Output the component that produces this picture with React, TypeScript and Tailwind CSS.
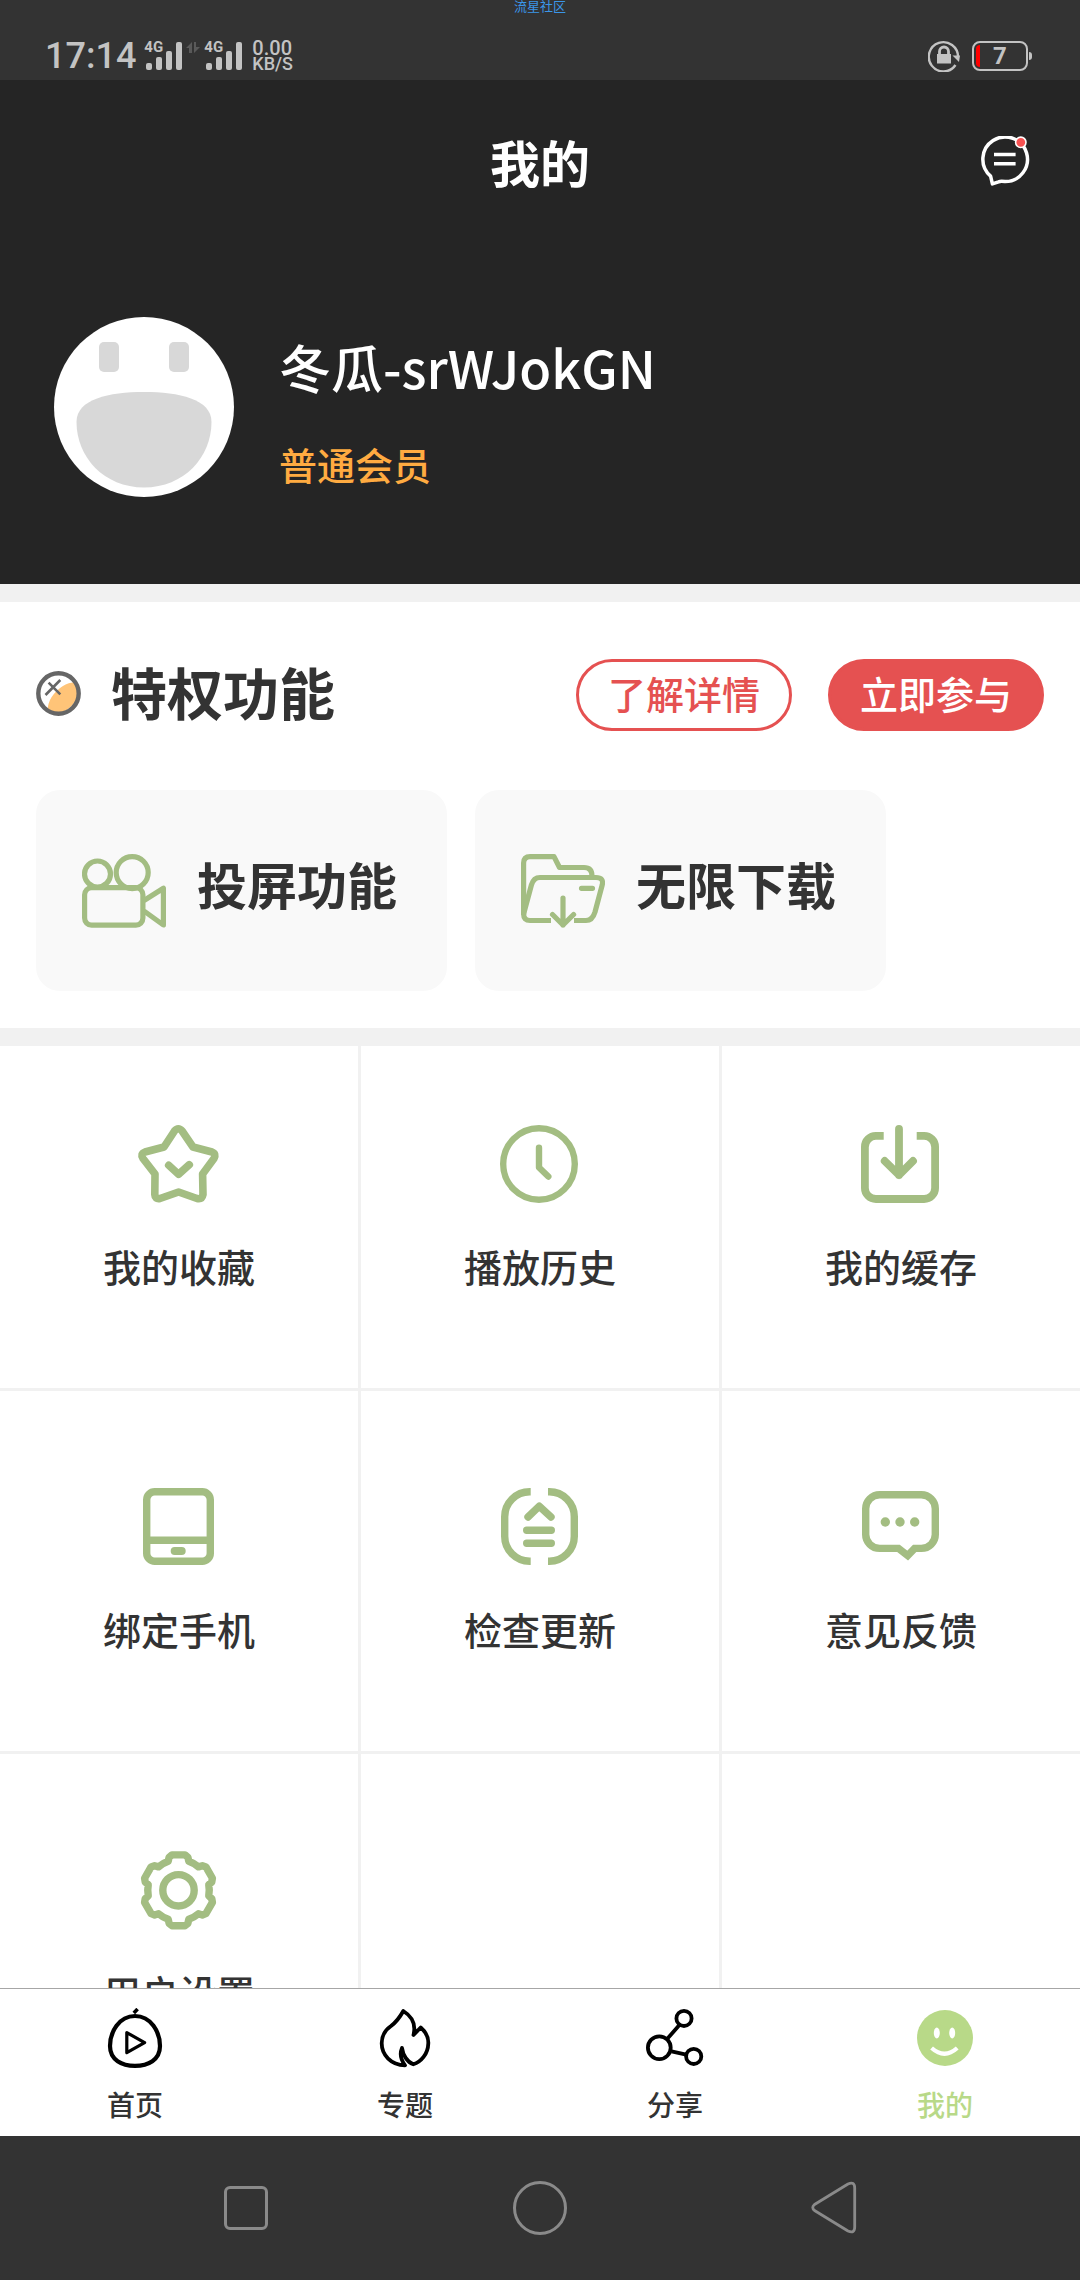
import type { ReactNode } from "react";

const GREEN = "#a3bd82";

function Signal() {
  return (
    <div className="relative h-7 w-[38px]">
      <span className="absolute left-0 top-0 text-[15px] leading-[11px] font-bold">4G</span>
      <svg className="h-7 w-[38px]" viewBox="0 0 38 28" fill="currentColor" aria-hidden="true">
        <rect x="2" y="21" width="6" height="7" rx="2" />
        <rect x="12" y="15" width="6" height="13" rx="2" />
        <rect x="22" y="9" width="6" height="19" rx="2" />
        <rect x="32" y="0" width="6" height="28" rx="2" />
      </svg>
    </div>
  );
}

function StatusBar() {
  return (
    <div className="shrink-0 bg-[#333333] text-[#c3c3c3] font-[Roboto,'Noto_Sans_CJK_SC',sans-serif]">
      <p className="text-center text-[13px] leading-[13px] text-[#3b96e8]">流星社区</p>
      <div className="flex h-[67px] items-center justify-between pt-[18px] pr-12 pl-[45px]">
        <div className="flex items-center">
          <time className="mr-2 text-[36px] leading-8 font-medium">17:14</time>
          <Signal />
          <svg className="mx-1 h-7 w-[14px]" viewBox="0 0 14 28" fill="#5a5a5a" aria-hidden="true">
            <path d="M6 0V11H3V6H0ZM8 0H10V5H14L8 11Z" />
          </svg>
          <Signal />
          <div className="ml-[10px] font-medium">
            <p className="text-[20px] leading-4">0.00</p>
            <p className="text-[18px] leading-4">KB/S</p>
          </div>
        </div>
        <div className="flex items-center gap-3">
          <svg className="size-8" viewBox="0 0 32 32" fill="none" stroke="currentColor" aria-hidden="true">
            <path d="M30 17A14.6 14.6 0 1 0 27.5 25" strokeWidth="2.4" />
            <path d="M24.5 15.5H32L31 22Z" fill="currentColor" stroke="none" />
            <rect x="9" y="14" width="14" height="9.5" fill="currentColor" stroke="none" />
            <path d="M11.5 15V11.5A4.4 4.4 0 0 1 20.5 11.5V15" strokeWidth="2.8" />
          </svg>
          <div className="flex items-center gap-px">
            <div className="flex h-[30px] w-14 items-center rounded-lg border-2 border-current px-[2px]">
              <span className="h-[22px] w-1 rounded-l-sm bg-[#ff0000]" />
              <span className="flex-1 pr-1 text-center text-[24px] leading-6 font-bold">7</span>
            </div>
            <span className="h-2 w-[3px] rounded-r-sm bg-current" />
          </div>
        </div>
      </div>
    </div>
  );
}

function Header() {
  return (
    <header className="bg-[#252525] pb-[87px] text-white">
      <div className="grid h-[162px] grid-cols-[1fr_auto_1fr] items-center px-[50px]">
        <h1 className="col-start-2 text-[50px] leading-[60px] font-bold">我的</h1>
        <button type="button" aria-label="消息" className="justify-self-end">
          <svg className="size-[50px]" viewBox="0 0 50 50" fill="none" stroke="currentColor">
            <path
              d="M10.6 40.2A22.3 22.3 0 1 1 25 45.6Q20.5 45 18.5 45.8L12.4 47.9Z"
              strokeWidth="3.5"
              strokeLinejoin="round"
            />
            <path d="M14 18.5H35.6M14 27.7H35.6" strokeWidth="3.5" />
            <circle cx="40.8" cy="6.3" r="5.2" fill="#f85252" strokeWidth="1.6" />
          </svg>
        </button>
      </div>
      <div className="mt-[75px] flex gap-[45px] pl-[54px]">
        <svg className="size-[180px] shrink-0" viewBox="0 0 180 180" role="img" aria-label="头像">
          <circle cx="90" cy="90" r="90" fill="#ffffff" />
          <g fill="#d8d8d8">
            <rect x="45" y="25" width="20" height="30" rx="5" />
            <rect x="115" y="25" width="20" height="30" rx="5" />
            <path d="M22.5 105C22.5 82 55 75 90 75S157.5 82 157.5 105C157.5 140 130 170.5 90 170.5S22.5 140 22.5 105Z" />
          </g>
        </svg>
        <div className="pt-5">
          <p className="text-[52px] leading-[60px] font-medium">冬瓜-srWJokGN</p>
          <p className="mt-[45px] text-[38px] leading-11 font-medium text-[#ffab41]">普通会员</p>
        </div>
      </div>
    </header>
  );
}

function CameraIcon() {
  return (
    <svg className="h-[74px] w-[84px]" viewBox="0 0 84 74" fill="none" stroke={GREEN} strokeWidth="5.2" strokeLinejoin="round" aria-hidden="true">
      <circle cx="15.5" cy="20" r="13" />
      <circle cx="50.2" cy="18.6" r="16" />
      <rect x="2.6" y="33.7" width="58.3" height="37.4" rx="7" />
      <path d="M62 46.5L81.4 34.2V71L62 57" />
    </svg>
  );
}

function FolderIcon() {
  return (
    <svg className="h-[74px] w-[84px]" viewBox="0 0 84 74" fill="none" stroke={GREEN} strokeWidth="5.2" strokeLinejoin="round" aria-hidden="true">
      <path d="M2.6 61V9Q2.6 2.6 9 2.6H33L38.5 13.5H63Q71 13.5 71 22" />
      <path d="M30 66.5H9Q2.6 66.5 2.6 60L10.4 31Q12.5 23.5 19 23.5H75Q83 23.5 81.2 31L74 58Q71.5 66.5 65 66.5H53" />
      <path d="M60.5 34.3H71.5M42 44V71M31.5 60.5L42 71L52.6 60.5" strokeLinecap="round" />
    </svg>
  );
}

const privileges = [
  { label: "投屏功能", icon: <CameraIcon /> },
  { label: "无限下载", icon: <FolderIcon /> },
];

function Privileges() {
  return (
    <section className="bg-white px-9 pt-[57px] pb-[37px]">
      <div className="flex h-[72px] items-center">
        <svg className="mb-1 size-[45px]" viewBox="0 0 45 45" fill="none" aria-hidden="true">
          <clipPath id="disc">
            <circle cx="22.5" cy="22.5" r="19" />
          </clipPath>
          <g clipPath="url(#disc)">
            <ellipse cx="28" cy="27.5" rx="20" ry="10.5" transform="rotate(-45 28 27.5)" fill="#ffc478" />
          </g>
          <circle cx="22.5" cy="22.5" r="20.2" stroke="#666666" strokeWidth="4.4" />
          <path d="M9.5 24L24.3 9M12.6 11.7L24.3 23.3" stroke="#666666" strokeWidth="2.6" />
        </svg>
        <h2 className="ml-[30px] flex-1 pb-2 text-[56px] leading-[64px] font-bold">特权功能</h2>
        <div className="flex gap-9 text-[38px] font-medium">
          <button type="button" className="w-[216px] rounded-full border-3 border-[#e55151] pb-1 leading-[62px] text-[#e55151]">
            了解详情
          </button>
          <button type="button" className="w-[216px] rounded-full border-3 border-[#e55151] bg-[#e55151] pb-1 leading-[62px] text-white">
            立即参与
          </button>
        </div>
      </div>
      <div className="mt-[59px] flex gap-7">
        {privileges.map((p) => (
          <button
            key={p.label}
            type="button"
            className="flex h-[201px] w-[411px] items-center gap-[31px] rounded-3xl bg-[#f9f9f9] pl-[46px] font-bold"
          >
            {p.icon}
            <span className="pb-4 text-[50px] leading-[60px]">{p.label}</span>
          </button>
        ))}
      </div>
    </section>
  );
}

function GridIcon({ children, width = 7.4 }: { children: ReactNode; width?: number }) {
  return (
    <svg
      className="h-[78px] w-[84px] overflow-visible"
      viewBox="0 0 84 78"
      fill="none"
      stroke={GREEN}
      strokeWidth={width}
      strokeLinejoin="round"
      aria-hidden="true"
    >
      {children}
    </svg>
  );
}

/* Six-toothed gear outline centred on the origin. */
function gearPath() {
  const tooth = [
    [-10.3, -29],
    [-9.4, -33],
    [-6.5, -35.4],
    [6.5, -35.4],
    [9.4, -33],
    [10.3, -29],
  ];
  let d = "";
  for (let k = 0; k < 6; k++) {
    const a = (k * Math.PI) / 3;
    tooth.forEach(([x, y], i) => {
      const px = (x * Math.cos(a) - y * Math.sin(a)).toFixed(2);
      const py = (x * Math.sin(a) + y * Math.cos(a)).toFixed(2);
      const cmd = i > 0 ? "L" : k === 0 ? "M" : "A30.7 30.7 0 0 1 ";
      d += `${cmd}${px} ${py}`;
    });
  }
  return `${d}A30.7 30.7 0 0 1 -10.3 -29Z`;
}

const entries = [
  {
    label: "我的收藏",
    icon: (
      <GridIcon width={7.6}>
        <path d="M27 22L37.5 6Q41.3 1.5 45.1 6L56 22L75 27Q79.5 28.8 77 33.5L65.6 49L66 69.5Q65 74.5 60 73.5L41.6 67L23 73.5Q18 74.5 17.8 69.5L18 49L6 33.5Q3 28.8 8 27Z" />
        <path d="M31.7 40.3L41.5 49.3L52.3 39.7" strokeLinecap="round" />
      </GridIcon>
    ),
  },
  {
    label: "播放历史",
    icon: (
      <GridIcon width={6.4}>
        <circle cx="41" cy="39" r="35.8" />
        <path d="M41 22.7V42.5L50.3 51.5" strokeLinecap="round" />
      </GridIcon>
    ),
  },
  {
    label: "我的缓存",
    icon: (
      <GridIcon width={7.8}>
        <path d="M24.7 10.9H16.9A11 11 0 0 0 5.9 21.9V63A11 11 0 0 0 16.9 74H65.1A11 11 0 0 0 76.1 63V21.9A11 11 0 0 0 65.1 10.9H57.7" />
        <path d="M40 4V50M25.7 36L40 50L54 36" strokeLinecap="round" />
      </GridIcon>
    ),
  },
  {
    label: "绑定手机",
    icon: (
      <GridIcon>
        <rect x="9.7" y="3.7" width="63.6" height="69.6" rx="8" />
        <path d="M9.7 52.2H73.3" />
        <rect x="33.7" y="59" width="15" height="8" rx="4" fill={GREEN} stroke="none" />
      </GridIcon>
    ),
  },
  {
    label: "检查更新",
    icon: (
      <GridIcon>
        <path d="M32.7 3.7H31.7A25 25 0 0 0 6.7 28.7V48.3A25 25 0 0 0 31.7 73.3H32.7M50 3.7H51.3A25 25 0 0 1 76.3 28.7V48.3A25 25 0 0 1 51.3 73.3H50" />
        <path d="M30 29L41.3 18.2L53 29M28.7 42.3H53.3M28.7 55.3H53.3" strokeLinecap="round" />
      </GridIcon>
    ),
  },
  {
    label: "意见反馈",
    icon: (
      <GridIcon>
        <path
          d="M20.7 6.7H62.3A14 14 0 0 1 76.3 20.7V46.4A14 14 0 0 1 62.3 60.4H55.6L48.7 67.6L39.5 60.4H20.7A14 14 0 0 1 6.7 46.4V20.7A14 14 0 0 1 20.7 6.7Z"
          strokeLinejoin="miter"
        />
        <g fill={GREEN} stroke="none">
          <circle cx="26.3" cy="34" r="4.7" />
          <circle cx="41" cy="34" r="4.7" />
          <circle cx="55.7" cy="34" r="4.7" />
        </g>
      </GridIcon>
    ),
  },
  {
    label: "用户设置",
    icon: (
      <GridIcon>
        <g transform="translate(41.5 39.3)">
          <path d={gearPath()} />
          <circle r="15.7" />
        </g>
      </GridIcon>
    ),
  },
];

function EntryGrid() {
  return (
    <section className="grid grid-cols-3 gap-[3px] bg-[#f1f1f1]">
      {entries.map((e, i) => (
        <button
          key={e.label}
          type="button"
          className={
            i < 3
              ? "flex flex-col items-center bg-white pt-[79px] pb-[97px]"
              : "flex flex-col items-center bg-white pt-[97px] pb-[97px]"
          }
        >
          {e.icon}
          <span className="mt-[37px] text-[38px] leading-[51px] font-medium">{e.label}</span>
        </button>
      ))}
      <div className="bg-white" />
      <div className="bg-white" />
    </section>
  );
}

const tabs = [
  {
    label: "首页",
    active: false,
    icon: (
      <>
        <path d="M30 8C46 8 55 24 55 38C55 52 43 57.8 30 57.8S5 52 5 38C5 24 14 8 30 8Z" strokeWidth="4.2" />
        <path d="M28.8 5L32.6 1" strokeWidth="3.6" />
        <path d="M21.8 24.6L39.6 34.7L21.8 44.6Z" strokeWidth="3.2" />
      </>
    ),
  },
  {
    label: "专题",
    active: false,
    icon: (
      <path
        d="M28.3 3C38 9 41 17 38.5 27L45.7 19.5C52 25 53.5 31 53.3 35.3C53 46 46 54 38.3 56.3C32 54 28 47 27 40C24.5 46 26 52 30 57.3C16 57 6.7 47 6.7 35.3C6.7 27 11 21.5 16 18C22 13.5 25 9 28.3 3Z"
        strokeWidth="3.8"
      />
    ),
  },
  {
    label: "分享",
    active: false,
    icon: (
      <g strokeWidth="3.8">
        <circle cx="14.3" cy="39.7" r="11.4" />
        <circle cx="39" cy="10.4" r="7.6" />
        <circle cx="48.7" cy="48.4" r="7.6" />
        <path d="M22.3 30.8L34.6 16.8M26.5 43.4L41.2 46.6" />
      </g>
    ),
  },
  {
    label: "我的",
    active: true,
    icon: (
      <>
        <circle cx="30" cy="30" r="28" fill="#b8d988" stroke="none" />
        <ellipse cx="21.8" cy="25" rx="3" ry="5.4" fill="#ffffff" stroke="none" />
        <ellipse cx="37.2" cy="25" rx="3" ry="5.4" fill="#ffffff" stroke="none" />
        <path d="M16.6 40Q29.5 51.5 42.2 40" stroke="#ffffff" strokeWidth="4.2" strokeLinejoin="miter" />
      </>
    ),
  },
];

function TabBar() {
  return (
    <nav className="grid shrink-0 grid-cols-4 border-t border-[#a6a6a6] bg-white pt-[19px] pb-3">
      {tabs.map((t) => (
        <a
          key={t.label}
          href="#"
          aria-current={t.active ? "page" : undefined}
          className={t.active ? "flex flex-col items-center text-[#b8d988]" : "flex flex-col items-center text-[#333333]"}
        >
          <svg className="size-[60px]" viewBox="0 0 60 60" fill="none" stroke="#000000" strokeLinejoin="round" aria-hidden="true">
            {t.icon}
          </svg>
          <span className="mt-4 text-[28px] leading-10 font-medium">{t.label}</span>
        </a>
      ))}
    </nav>
  );
}

function SystemNav() {
  return (
    <div className="grid h-36 shrink-0 grid-cols-3 items-center justify-items-center bg-[#333333] px-[99px] text-[#8a8a8a]">
      <button type="button" aria-label="最近任务" className="size-11 rounded-md border-3 border-current" />
      <button type="button" aria-label="主屏幕" className="size-[54px] rounded-full border-3 border-current" />
      <button type="button" aria-label="返回">
        <svg className="h-[54px] w-[46px]" viewBox="0 0 46 54" fill="none" stroke="currentColor" strokeWidth="2.8">
          <path d="M37 3Q43.7 0 43.7 7V46Q43.7 53 37 50L3.5 29.5Q0 26.5 3.5 23.5Z" strokeLinejoin="round" />
        </svg>
      </button>
    </div>
  );
}

export default function App() {
  return (
    <div className="flex h-screen flex-col bg-[#f1f1f1] text-[#333333] font-[STXingkai,'Noto_Sans_CJK_SC',sans-serif]">
      <StatusBar />
      <main className="flex min-h-0 flex-1 flex-col overflow-hidden">
        <div className="flex shrink-0 flex-col gap-[18px]">
          <Header />
          <Privileges />
          <EntryGrid />
        </div>
      </main>
      <TabBar />
      <SystemNav />
    </div>
  );
}
